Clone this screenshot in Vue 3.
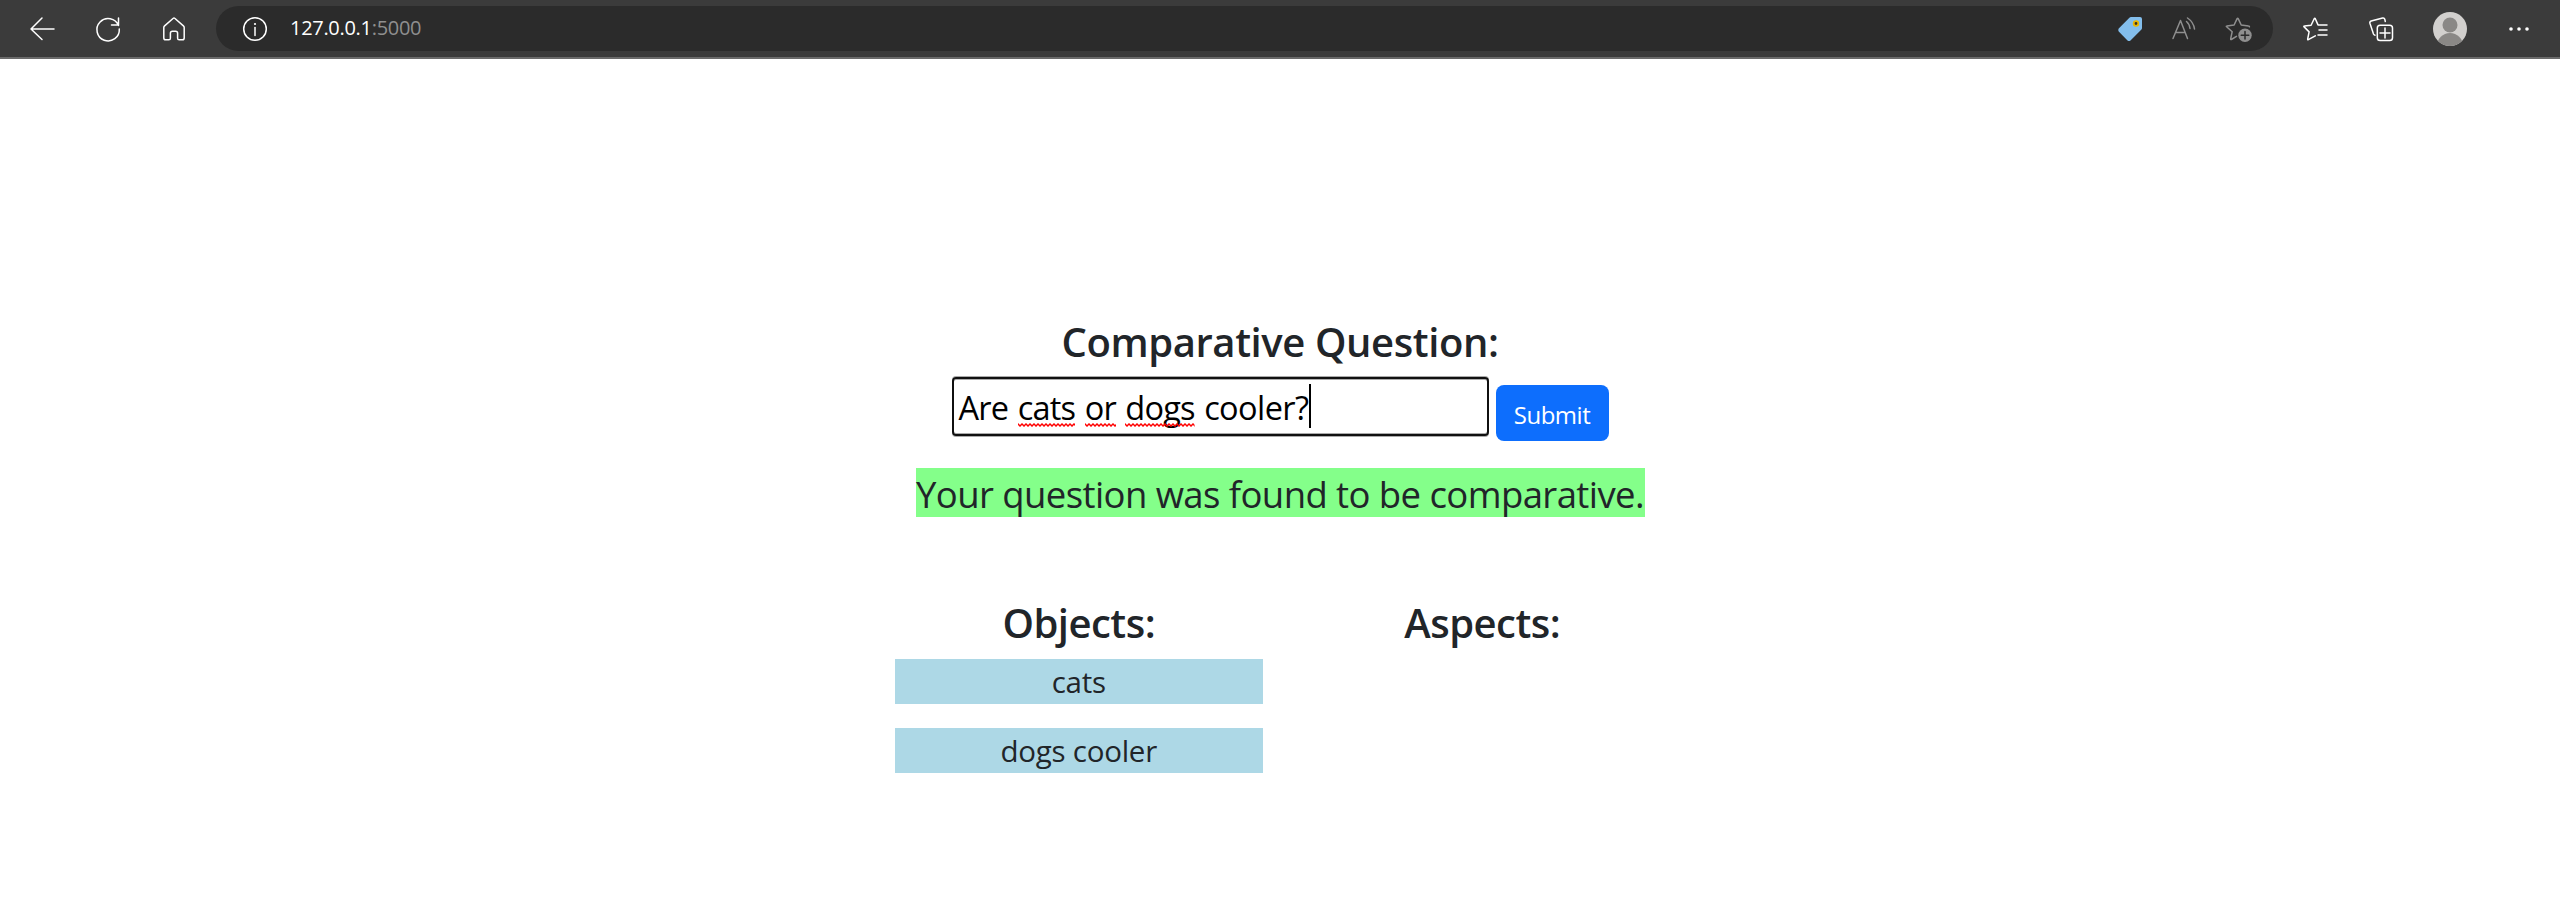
<script setup>
const words = [
  { text: 'Are', wrong: false },
  { text: 'cats', wrong: true },
  { text: 'or', wrong: true },
  { text: 'dogs', wrong: true },
  { text: 'cooler?', wrong: false },
]
const objects = ['cats', 'dogs cooler']
</script>

<template>
  <div class="window">
    <header class="toolbar">
      <nav class="nav">
        <svg class="icon" viewBox="0 0 24 24"><path d="M24 12H1M12 1L1 12l11 10.500" /></svg>
        <svg class="icon" viewBox="0 0 24 24"><path d="M22.500 8.500A11.200 11.200 0 1 0 23.300 12M22.500 1v7h-7" /></svg>
        <svg class="icon" viewBox="0 0 24 24"><path d="M1.800 10.600Q1.800 9.600 2.600 8.900L11 1.500q1-.8 2 0l8.400 7.400q.8.7.8 1.700V21q0 1.800-1.800 1.800h-3.200q-1.600 0-1.600-1.600v-5q0-2-2-2h-3.200q-2 0-2 2v5q0 1.600-1.600 1.600H3.600Q1.800 22.800 1.800 21z" /></svg>
      </nav>
      <div class="address">
        <svg class="icon info" viewBox="0 0 24 24"><circle cx="12" cy="12" r="11.300" /><path d="M12 10.500v8" /><circle class="solid" cx="12" cy="7" r="1.100" /></svg>
        <span class="url">127.0.0.1<span class="port">:5000</span></span>
        <div class="address-tools">
          <svg class="icon tag" viewBox="0 0 24 24"><path d="M13 0h9q2 0 2 2v9q0 1-.8 1.800L12.500 23.500q-1.500 1-3 0L.7 14.500q-1-1.500 0-3L11.400.7Q12 0 13 0z" /><circle cx="18" cy="6.500" r="2.300" /></svg>
          <svg class="icon dim" viewBox="0 0 24 24"><path d="M1 21.500L8.500 3.500l7 18M3.800 15.500h9.400M14.500 4.500q3 2.500 3.500 7M15.500 1q6 4 7 11" /></svg>
          <svg class="icon dim" viewBox="0 0 26 24"><path d="M10.500 19.300L5.300 22.500q-.8.400-.6-.8l1.500-7-5.600-5q-.7-.7.3-.8l7.200-.9 3-6.400q.6-.9 1.100 0l3 6.400 7.300.9q1 .1.900.9" /><circle class="solid" cx="19" cy="18.300" r="6.700" /><path class="cut" d="M15.200 18.300h7.600M19 14.500v7.600" /></svg>
        </div>
      </div>
      <div class="actions">
        <svg class="icon" viewBox="0 0 24 24"><path d="M12.300 18.800L5.300 22.700q-.8.400-.6-.8l1.400-7-5-5q-.7-.7.3-.8l6.700-.9L11.200 1.700q.6-.9 1.100 0l2.700 6.200H24M16 13h8M15 18h9" /></svg>
        <svg class="icon" viewBox="0 0 24 24"><path d="M16.300 4.500l-.5-2.200q-.5-1.700-2.200-1.300L2.200 4Q.5 4.500.9 6.200L4.500 17q.4 1 1.500 1.200" /><rect x="8.300" y="8.300" width="15.200" height="15.200" rx="2.800" /><path d="M11 16h10M16 11v10" /></svg>
        <svg class="avatar" viewBox="0 0 34 34">
          <clipPath id="avatar-clip"><circle cx="17" cy="17" r="17" /></clipPath>
          <g clip-path="url(#avatar-clip)"><rect width="34" height="34" fill="#d2d0ce" /><circle cx="17" cy="13" r="7.500" fill="#8a8886" /><circle cx="17" cy="34" r="13" fill="#8a8886" /></g>
        </svg>
        <svg class="icon" viewBox="0 0 24 24"><circle class="solid" cx="4" cy="12" r="1.800" /><circle class="solid" cx="12" cy="12" r="1.800" /><circle class="solid" cx="20" cy="12" r="1.800" /></svg>
      </div>
    </header>

    <main class="page">
      <h1 class="heading title">Comparative Question:</h1>
      <form class="ask" @submit.prevent>
        <div class="field">
          <span v-for="w in words" :key="w.text" class="word">{{ w.text }}<svg v-if="w.wrong" class="squiggle" height="4">
            <defs><pattern :id="'wave-' + w.text" width="4" height="4" patternUnits="userSpaceOnUse"><path d="M-1 0L0 1 2 3 4 1 5 0" /></pattern></defs>
            <rect width="100%" height="4" :fill="'url(#wave-' + w.text + ')'" />
          </svg></span><i class="caret"></i>
        </div>
        <button class="submit">Submit</button>
      </form>
      <p class="verdict"><span>Your question was found to be comparative.</span></p>
      <div class="results">
        <section class="column">
          <h1 class="heading objects">Objects:</h1>
          <div v-for="o in objects" :key="o" class="item">{{ o }}</div>
        </section>
        <section class="column">
          <h1 class="heading aspects">Aspects:</h1>
        </section>
      </div>
    </main>
  </div>
</template>

<style>
body { background: #fff; }
</style>

<style scoped>
.window { height: 908px; overflow: hidden; font-family: "Open Sans", "Noto Sans", sans-serif; color: #212529; }
.toolbar { box-sizing: border-box; height: 59px; padding-top: 6px; background: #3b3b3b; border-bottom: 2px solid #6b6b6b; display: flex; align-items: flex-start; }
.icon { display: block; width: 24px; height: 24px; flex: none; fill: none; stroke: #fff; stroke-width: 1.5; stroke-linecap: round; stroke-linejoin: round; overflow: visible; }
.icon .solid { fill: #fff; stroke: none; }
.nav { width: 216px; height: 45px; box-sizing: border-box; padding-left: 30px; display: flex; align-items: center; gap: 42px; }
.address { width: 2057px; height: 45px; border-radius: 23px; background: #2b2b2b; display: flex; align-items: center; box-sizing: border-box; padding-left: 27px; padding-right: 21px; }
.url { margin-left: 23px; font-size: 20px; line-height: 44px; height: 45px; letter-spacing: -0.3px; color: #fff; }
.port { color: #8f8f8f; }
.address-tools { margin-left: auto; display: flex; align-items: center; gap: 29px; }
.icon.dim { stroke: #8f8f8f; width: 26px; }
.icon.dim .solid { fill: #8f8f8f; }
.icon.dim .cut { stroke: #2b2b2b; }
.icon.tag { stroke: none; fill: #83beec; }
.icon.tag circle { fill: #3a3320; stroke: #eab600; stroke-width: 1.8; }
.actions { height: 45px; flex: 1; display: flex; align-items: center; padding-left: 30px; }
.actions .icon + .icon { margin-left: 42px; }
.avatar { width: 34px; height: 34px; margin: 0 40px; }
.page { display: flex; flex-direction: column; align-items: center; }
.heading { margin: 0; font-size: 40px; line-height: 46px; height: 48px; font-weight: 600; letter-spacing: -0.4px; white-space: nowrap; text-align: center; }
.title { margin-top: 260px; }
.objects, .aspects { letter-spacing: -0.5px; line-height: 47px; }
.aspects { padding-left: 2px; }
.ask { display: flex; margin-top: 9px; height: 66px; gap: 7px; }
.field { box-sizing: border-box; width: 537px; height: 59px; margin-top: 1px; border: 2px solid #101010; border-radius: 4px; box-shadow: 0 -1px #aaa, 0 1px #aaa, inset 0 1px #aaa, inset 0 -1px #aaa; padding: 2px 0 0 5px; display: flex; align-items: center; gap: 9.3px; color: #000; font-size: 32.5px; letter-spacing: -0.75px; white-space: nowrap; }
.word { position: relative; line-height: 50px; }
.word:last-of-type { letter-spacing: -0.6px; }
.squiggle { position: absolute; left: 0; bottom: 6px; width: 100%; }
.squiggle path { fill: none; stroke: #f00; stroke-width: 1.5; }
.caret { width: 2px; height: 44px; background: #000; margin: -4px 0 0 -9px; }
.submit { width: 113px; height: 56px; margin-top: 9px; padding: 2px 0 0; border: 0; border-radius: 8px; background: #0d6efd; color: #fff; font: 24px "Open Sans", sans-serif; letter-spacing: -0.5px; }
.verdict { margin: 26px 0 0; height: 49px; width: 729px; background: #84ff8a; font-size: 36.5px; line-height: 52px; letter-spacing: -0.58px; white-space: nowrap; text-align: center; }
.results { display: flex; margin-top: 82px; gap: 35px; width: 770px; }
.column { width: 368px; }
.column .heading { margin-bottom: 12px; }
.item { height: 45px; line-height: 46px; margin-bottom: 24px; background: #add8e6; font-size: 29.5px; letter-spacing: -0.25px; text-align: center; }
</style>
